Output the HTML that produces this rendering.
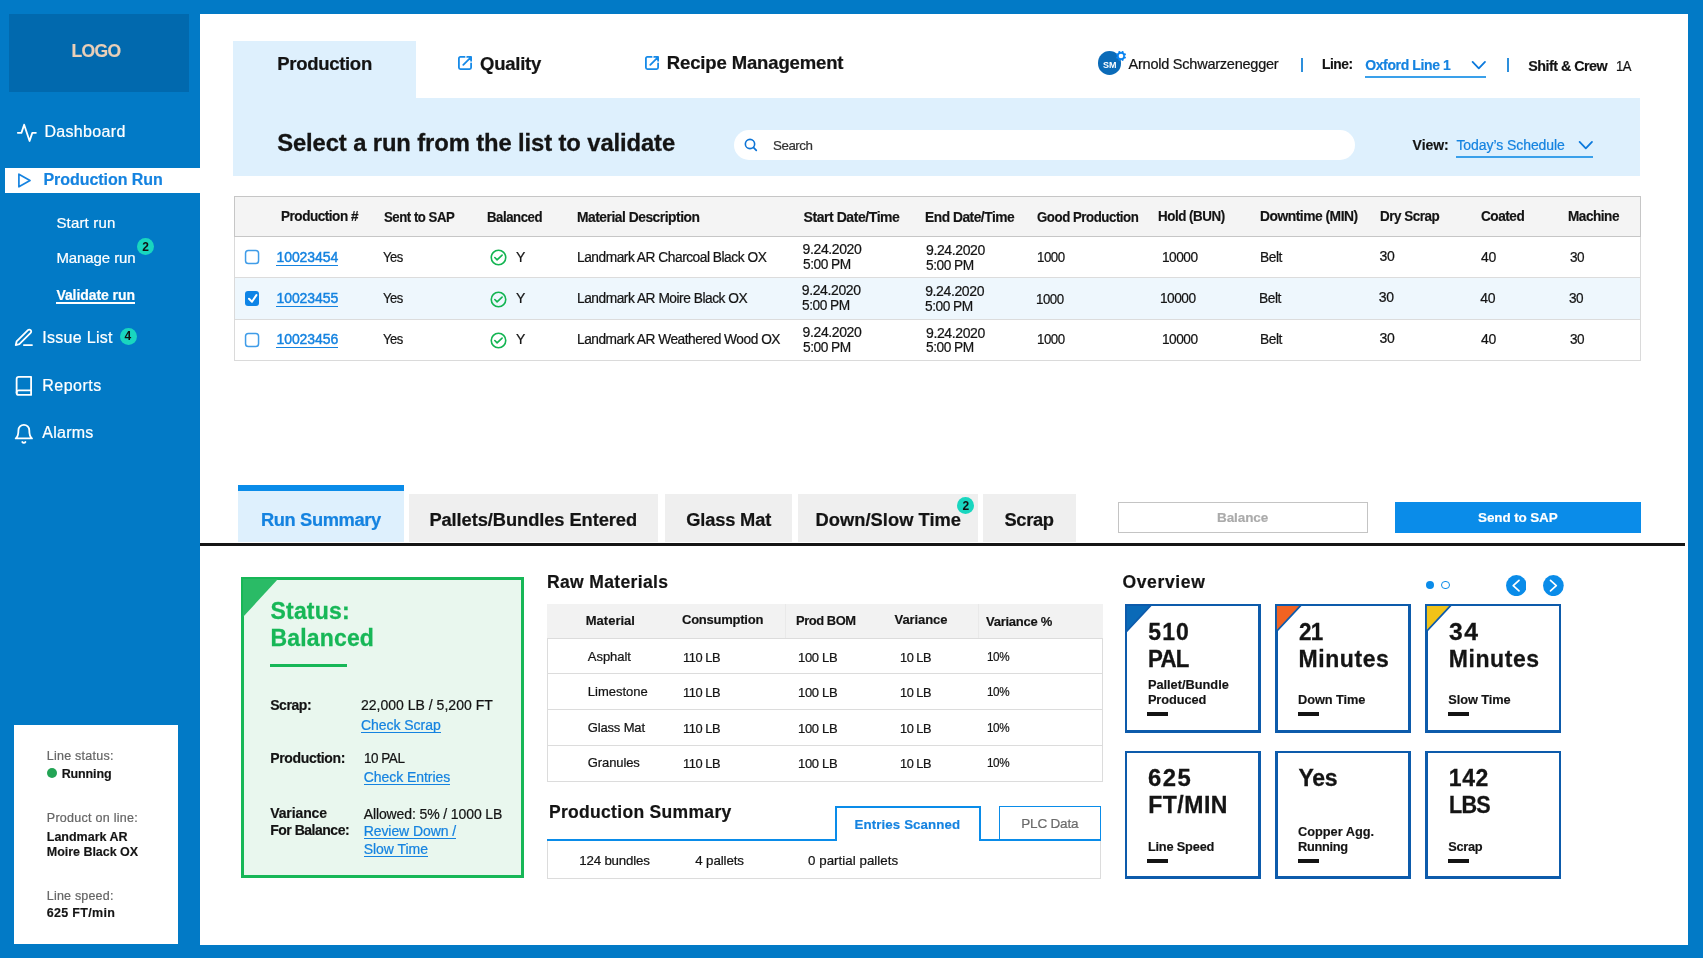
<!DOCTYPE html><html><head><meta charset="utf-8"><title>Production Run - Validate</title><style>
html,body{margin:0;padding:0}
body{width:1703px;height:958px;overflow:hidden;background:#027AC6;font-family:"Liberation Sans",Arial,sans-serif;position:relative}
#app{position:absolute;left:0;top:0;width:1703px;height:958px;overflow:hidden;will-change:transform}
#app div,#app svg,#app span{position:absolute;box-sizing:border-box}
#app span{white-space:nowrap;line-height:20px;display:block}
</style></head><body><div id="app">
<div style="left:200px;top:14.2px;width:1488px;height:930.8px;background:#fff;"></div>
<div style="left:8.5px;top:13.5px;width:180.5px;height:78.8px;background:#0169AE;"></div>
<div style="left:5px;top:167.5px;width:196px;height:25.8px;background:#fff;"></div>
<div style="left:56.4px;top:302.2px;width:78.6px;height:2px;background:#fff;"></div>
<div style="left:137px;top:237.6px;width:17.2px;height:17.2px;background:#19D6BF;border-radius:50%"></div>
<div style="left:119.5px;top:327.6px;width:17px;height:17px;background:#19D6BF;border-radius:50%"></div>
<svg style="left:16.2px;top:121.5px" width="21.72" height="21.72" viewBox="0 0 24 24"><g fill="none" stroke="#fff" stroke-width="2" stroke-linecap="round" stroke-linejoin="round"><polyline points="22 12 18 12 15 21 9 3 6 12 2 12"/></g></svg>
<svg style="left:16px;top:170px" width="18" height="21" viewBox="0 0 18 21"><path d="M2.9 4.2L14 10.5L2.9 16.8Z" fill="none" stroke="#1583E0" stroke-width="1.7" stroke-linejoin="round"/></svg>
<svg style="left:13.3px;top:327px" width="21.72" height="21.72" viewBox="0 0 24 24"><g fill="none" stroke="#fff" stroke-width="2" stroke-linecap="round" stroke-linejoin="round"><path d="M12 20h9"/><path d="M16.5 3.5a2.121 2.121 0 0 1 3 3L7 19l-4 1 1-4L16.5 3.5z"/></g></svg>
<svg style="left:12.6px;top:374.55px" width="21.72" height="21.72" viewBox="0 0 24 24"><g fill="none" stroke="#fff" stroke-width="2" stroke-linecap="round" stroke-linejoin="round"><path d="M4 19.5A2.5 2.5 0 0 1 6.5 17H20"/><path d="M6.5 2H20v20H6.5A2.5 2.5 0 0 1 4 19.5v-15A2.5 2.5 0 0 1 6.5 2z"/></g></svg>
<svg style="left:12.6px;top:423.1px" width="21.72" height="21.72" viewBox="0 0 24 24"><g fill="none" stroke="#fff" stroke-width="2" stroke-linecap="round" stroke-linejoin="round"><path d="M18 8A6 6 0 0 0 6 8c0 7-3 9-3 9h18s-3-2-3-9"/><path d="M13.73 21a2 2 0 0 1-3.46 0"/></g></svg>
<div style="left:14.2px;top:725.1px;width:164.1px;height:218.9px;background:#fff;"></div>
<div style="left:46.5px;top:768px;width:10.4px;height:10.4px;background:#23A455;border-radius:50%"></div>
<div style="left:233.2px;top:40.7px;width:183.2px;height:57.3px;background:#DEF0FD;"></div>
<div style="left:233.2px;top:97.6px;width:1406.9px;height:78.1px;background:#DEF0FD;"></div>
<svg style="left:457.9px;top:56.1px" width="14" height="14" viewBox="0 0 14 14"><g fill="none" stroke="#168AE8" stroke-width="1.8" stroke-linecap="round" stroke-linejoin="round"><path d="M6.6 0.9H2.4a1.5 1.5 0 0 0-1.5 1.5V11.6a1.5 1.5 0 0 0 1.5 1.5H11.6a1.5 1.5 0 0 0 1.5-1.5V7.3"/><path d="M5.3 8.8L12.8 1.3M9.2 0.9H13.1V4.8"/></g></svg>
<svg style="left:645.4px;top:56.1px" width="14" height="14" viewBox="0 0 14 14"><g fill="none" stroke="#168AE8" stroke-width="1.8" stroke-linecap="round" stroke-linejoin="round"><path d="M6.6 0.9H2.4a1.5 1.5 0 0 0-1.5 1.5V11.6a1.5 1.5 0 0 0 1.5 1.5H11.6a1.5 1.5 0 0 0 1.5-1.5V7.3"/><path d="M5.3 8.8L12.8 1.3M9.2 0.9H13.1V4.8"/></g></svg>
<div style="left:733.9px;top:130px;width:621.5px;height:30.2px;background:#fff;border-radius:15.1px"></div>
<svg style="left:743px;top:137px" width="16" height="16" viewBox="0 0 16 16"><circle cx="7" cy="7" r="4.65" fill="none" stroke="#0D74D6" stroke-width="1.6"/><path d="M10.4 10.4L13.3 13.4" stroke="#0D74D6" stroke-width="1.7" stroke-linecap="round"/></svg>
<svg style="left:1577.8px;top:139.8px" width="16" height="10.5" viewBox="0 0 16 10.5"><path d="M1.6 1.9L7.8 8.3L14 1.9" fill="none" stroke="#0B79DC" stroke-width="1.8" stroke-linejoin="round" stroke-linecap="round"/></svg>
<div style="left:1456.4px;top:156.3px;width:136.4px;height:1.9px;background:#3AA0EA;"></div>
<div style="left:1097.6px;top:51.1px;width:23.8px;height:24px;background:#0B6BB8;border-radius:50%"></div>
<svg style="left:1114.9px;top:49.7px" width="12" height="12" viewBox="0 0 12 12"><circle cx="6" cy="6" r="3.9" fill="#0A84F0"/><circle cx="9.79" cy="7.57" r="1.15" fill="#0A84F0"/><circle cx="7.57" cy="9.79" r="1.15" fill="#0A84F0"/><circle cx="4.43" cy="9.79" r="1.15" fill="#0A84F0"/><circle cx="2.21" cy="7.57" r="1.15" fill="#0A84F0"/><circle cx="2.21" cy="4.43" r="1.15" fill="#0A84F0"/><circle cx="4.43" cy="2.21" r="1.15" fill="#0A84F0"/><circle cx="7.57" cy="2.21" r="1.15" fill="#0A84F0"/><circle cx="9.79" cy="4.43" r="1.15" fill="#0A84F0"/><circle cx="6" cy="6" r="2.3" fill="#fff"/></svg>
<div style="left:1301.2px;top:57.6px;width:1.8px;height:14.7px;background:#2D8FDC;"></div>
<svg style="left:1471px;top:60px" width="16" height="10.5" viewBox="0 0 16 10.5"><path d="M1.6 1.9L7.8 8.3L14 1.9" fill="none" stroke="#0B79DC" stroke-width="1.8" stroke-linejoin="round" stroke-linecap="round"/></svg>
<div style="left:1365.2px;top:76px;width:120.6px;height:2px;background:#3AA0EA;"></div>
<div style="left:1507px;top:57.6px;width:1.8px;height:14.7px;background:#2D8FDC;"></div>
<div style="left:234px;top:236px;width:1407px;height:125px;background:#fff;border:1px solid #dadada;border-top:none"></div>
<div style="left:235px;top:278px;width:1405px;height:41px;background:#EEF7FD;"></div>
<div style="left:235px;top:277px;width:1405px;height:1px;background:#dcdcdc;"></div>
<div style="left:235px;top:319px;width:1405px;height:1px;background:#dcdcdc;"></div>
<div style="left:234px;top:196px;width:1407px;height:41px;background:#F4F4F4;border:1.5px solid #c6c6c6"></div>
<svg style="left:244px;top:249.1px" width="16" height="16" viewBox="0 0 16 16"><rect x="1.55" y="1.55" width="13" height="13" rx="2.8" fill="#fff" stroke="#3F9CE8" stroke-width="1.5"/></svg>
<div style="left:276.4px;top:264.7px;width:62px;height:1.4px;background:#1583E0;"></div>
<svg style="left:489.7px;top:249.3px" width="17" height="17" viewBox="0 0 17 17"><circle cx="8.5" cy="8.5" r="7.25" fill="none" stroke="#12B451" stroke-width="1.6"/><path d="M4.8 8.5L7.1 10.9L12.1 6.1" fill="none" stroke="#12B451" stroke-width="1.6" stroke-linecap="round" stroke-linejoin="round"/></svg>
<div style="left:244.8px;top:291.4px;width:14.6px;height:14.5px;background:#0E84E6;border-radius:3px"></div>
<svg style="left:244.8px;top:291.2px" width="14.7" height="14.7" viewBox="0 0 14.7 14.7"><path d="M4 7.7L7 10.7L11.4 4.1" fill="none" stroke="#fff" stroke-width="2" stroke-linecap="round" stroke-linejoin="round"/></svg>
<div style="left:276.4px;top:305.7px;width:62px;height:1.4px;background:#1583E0;"></div>
<svg style="left:489.7px;top:290.6px" width="17" height="17" viewBox="0 0 17 17"><circle cx="8.5" cy="8.5" r="7.25" fill="none" stroke="#12B451" stroke-width="1.6"/><path d="M4.8 8.5L7.1 10.9L12.1 6.1" fill="none" stroke="#12B451" stroke-width="1.6" stroke-linecap="round" stroke-linejoin="round"/></svg>
<svg style="left:244px;top:331.7px" width="16" height="16" viewBox="0 0 16 16"><rect x="1.55" y="1.55" width="13" height="13" rx="2.8" fill="#fff" stroke="#3F9CE8" stroke-width="1.5"/></svg>
<div style="left:276.4px;top:346.7px;width:62px;height:1.4px;background:#1583E0;"></div>
<svg style="left:489.7px;top:331.9px" width="17" height="17" viewBox="0 0 17 17"><circle cx="8.5" cy="8.5" r="7.25" fill="none" stroke="#12B451" stroke-width="1.6"/><path d="M4.8 8.5L7.1 10.9L12.1 6.1" fill="none" stroke="#12B451" stroke-width="1.6" stroke-linecap="round" stroke-linejoin="round"/></svg>
<div style="left:237.8px;top:484.8px;width:166.2px;height:57.4px;background:#DEF0FD;"></div>
<div style="left:237.8px;top:484.8px;width:166.2px;height:5.8px;background:#0A8CE9;"></div>
<div style="left:408.8px;top:494.2px;width:249.5px;height:47.6px;background:#EFEFEF;"></div>
<div style="left:665.1px;top:494.2px;width:127.4px;height:47.6px;background:#EFEFEF;"></div>
<div style="left:798.1px;top:494.2px;width:180.4px;height:47.6px;background:#EFEFEF;"></div>
<div style="left:983.3px;top:494.2px;width:92.4px;height:47.6px;background:#EFEFEF;"></div>
<div style="left:200px;top:543.3px;width:1485px;height:2.4px;background:#151515;"></div>
<div style="left:957.3px;top:497px;width:17px;height:17px;background:#19D6BF;border-radius:50%"></div>
<div style="left:1117.5px;top:501.8px;width:250.3px;height:31.6px;background:#fff;border:1.3px solid #c4c4c4"></div>
<div style="left:1395.4px;top:502.4px;width:245.4px;height:30.3px;background:#0A8CE9;"></div>
<div style="left:241.1px;top:577.1px;width:282.5px;height:300.7px;background:#17B757;"></div>
<div style="left:243.8px;top:580px;width:277px;height:295px;background:#E9F7EE;"></div>
<svg style="left:243px;top:579px" width="36" height="39" viewBox="0 0 36 39"><path d="M0 0H35L0 38Z" fill="#2ABB66"/></svg>
<div style="left:270.2px;top:663.9px;width:76.6px;height:3.5px;background:#17B757;"></div>
<div style="left:360.9px;top:731.6px;width:79.8px;height:1.3px;background:#1583E0;"></div>
<div style="left:363.7px;top:784px;width:86.6px;height:1.3px;background:#1583E0;"></div>
<div style="left:363.7px;top:838.2px;width:92.5px;height:1.3px;background:#1583E0;"></div>
<div style="left:363.7px;top:856px;width:64.3px;height:1.3px;background:#1583E0;"></div>
<div style="left:546.6px;top:603.9px;width:556.9px;height:177.9px;background:#fff;border:1.2px solid #dcdcdc"></div>
<div style="left:546.6px;top:603.9px;width:556.9px;height:34.1px;background:#F2F2F2;"></div>
<div style="left:785px;top:604px;width:1px;height:34px;background:#e9e9e9;"></div>
<div style="left:978px;top:604px;width:1px;height:34px;background:#e9e9e9;"></div>
<div style="left:546.6px;top:637.6px;width:556.9px;height:1.2px;background:#dcdcdc;"></div>
<div style="left:546.6px;top:672.9px;width:556.9px;height:1.2px;background:#dcdcdc;"></div>
<div style="left:546.6px;top:708.8px;width:556.9px;height:1.2px;background:#dcdcdc;"></div>
<div style="left:546.6px;top:744.6px;width:556.9px;height:1.2px;background:#dcdcdc;"></div>
<div style="left:547.3px;top:840px;width:553.7px;height:39.2px;background:#fff;border:1.2px solid #dcdcdc"></div>
<div style="left:547.3px;top:838.9px;width:553.7px;height:2.1px;background:#0A8CE9;"></div>
<div style="left:834.7px;top:806.4px;width:146.6px;height:34.6px;background:#fff;border:2px solid #0A8CE9;border-bottom:none"></div>
<div style="left:999.1px;top:806.4px;width:101.5px;height:34.6px;background:#fff;border:1.2px solid #0A8CE9;border-bottom:2px solid #0A8CE9"></div>
<div style="left:1425.6px;top:580.9px;width:8px;height:8px;background:#0A8CE9;border-radius:50%"></div>
<div style="left:1441.4px;top:580.6px;width:8.6px;height:8.6px;background:#fff;border-radius:50%;border:1.3px solid #0A8CE9"></div>
<svg style="left:1505.6px;top:574.8px" width="20.8" height="21.2" viewBox="0 0 20.8 21.2"><ellipse cx="10.4" cy="10.6" rx="10.35" ry="10.55" fill="#0A8CE9"/><path d="M13 5.3L7.2 10.6L13 15.9" fill="none" stroke="#fff" stroke-width="1.7" stroke-linecap="round" stroke-linejoin="round"/></svg>
<svg style="left:1542.8px;top:574.8px" width="20.8" height="21.2" viewBox="0 0 20.8 21.2"><ellipse cx="10.4" cy="10.6" rx="10.35" ry="10.55" fill="#0A8CE9"/><path d="M7.5 5.3L13.3 10.6L7.5 15.9" fill="none" stroke="#fff" stroke-width="1.7" stroke-linecap="round" stroke-linejoin="round"/></svg>
<div style="left:1124.8px;top:603.9px;width:136.1px;height:129.1px;background:#0D5BAB;"></div>
<div style="left:1127.3px;top:606.4px;width:131.1px;height:124.1px;background:#fff;"></div>
<svg style="left:1125.8px;top:604.9px" width="30" height="32" viewBox="0 0 30 32"><path d="M0 0H25.2L0 27Z" fill="#0A6AB8" stroke="#0D5BAB" stroke-width="1.8"/></svg>
<div style="left:1147.3px;top:712.3px;width:21.2px;height:3.6px;background:#141414;"></div>
<div style="left:1275px;top:603.9px;width:135.9px;height:129.1px;background:#0D5BAB;"></div>
<div style="left:1277.5px;top:606.4px;width:130.9px;height:124.1px;background:#fff;"></div>
<svg style="left:1276px;top:604.9px" width="30" height="32" viewBox="0 0 30 32"><path d="M0 0H25.2L0 27Z" fill="#F26322" stroke="#0D5BAB" stroke-width="1.8"/></svg>
<div style="left:1297.5px;top:712.3px;width:21.2px;height:3.6px;background:#141414;"></div>
<div style="left:1425.2px;top:603.9px;width:136.2px;height:129.1px;background:#0D5BAB;"></div>
<div style="left:1427.7px;top:606.4px;width:131.2px;height:124.1px;background:#fff;"></div>
<svg style="left:1426.2px;top:604.9px" width="30" height="32" viewBox="0 0 30 32"><path d="M0 0H25.2L0 27Z" fill="#F2C318" stroke="#0D5BAB" stroke-width="1.8"/></svg>
<div style="left:1447.7px;top:712.3px;width:21.2px;height:3.6px;background:#141414;"></div>
<div style="left:1124.8px;top:750.6px;width:136.1px;height:128.2px;background:#0D5BAB;"></div>
<div style="left:1127.3px;top:753.1px;width:131.1px;height:123.2px;background:#fff;"></div>
<div style="left:1147.3px;top:859px;width:21.2px;height:3.6px;background:#141414;"></div>
<div style="left:1275px;top:750.6px;width:135.9px;height:128.2px;background:#0D5BAB;"></div>
<div style="left:1277.5px;top:753.1px;width:130.9px;height:123.2px;background:#fff;"></div>
<div style="left:1297.5px;top:859px;width:21.2px;height:3.6px;background:#141414;"></div>
<div style="left:1425.2px;top:750.6px;width:136.2px;height:128.2px;background:#0D5BAB;"></div>
<div style="left:1427.7px;top:753.1px;width:131.2px;height:123.2px;background:#fff;"></div>
<div style="left:1447.7px;top:859px;width:21.2px;height:3.6px;background:#141414;"></div>
<span style="left:71.4px;top:41px;line-height:20px;font-size:17.5px;font-weight:700;color:#E9CFB8;letter-spacing:-0.613px;-webkit-text-stroke:0.21px;">LOGO</span>
<span style="left:44.4px;top:123px;line-height:17px;font-size:16px;font-weight:400;color:#fff;letter-spacing:0.340px;-webkit-text-stroke:0.22px;">Dashboard</span>
<span style="left:43.4px;top:171px;line-height:17px;font-size:16px;font-weight:700;color:#1583E0;letter-spacing:-0.045px;-webkit-text-stroke:0.19px;">Production Run</span>
<span style="left:56.4px;top:214px;line-height:17px;font-size:15px;font-weight:400;color:#fff;letter-spacing:0.171px;-webkit-text-stroke:0.22px;">Start run</span>
<span style="left:56.4px;top:249px;line-height:17px;font-size:15px;font-weight:400;color:#fff;letter-spacing:-0.085px;-webkit-text-stroke:0.22px;">Manage run</span>
<span style="left:56.4px;top:287px;line-height:16px;font-size:14px;font-weight:700;color:#fff;letter-spacing:-0.069px;-webkit-text-stroke:0.17px;">Validate run</span>
<span style="left:42.3px;top:329px;line-height:17px;font-size:16px;font-weight:400;color:#fff;letter-spacing:0.290px;-webkit-text-stroke:0.22px;">Issue List</span>
<span style="left:42.3px;top:377px;line-height:17px;font-size:16px;font-weight:400;color:#fff;letter-spacing:0.478px;-webkit-text-stroke:0.22px;">Reports</span>
<span style="left:42.3px;top:424px;line-height:17px;font-size:16px;font-weight:400;color:#fff;letter-spacing:0.244px;-webkit-text-stroke:0.22px;">Alarms</span>
<span style="left:142.2px;top:240px;line-height:14px;font-size:12px;font-weight:700;color:#111;letter-spacing:0.000px;">2</span>
<span style="left:124.6px;top:329px;line-height:14px;font-size:12px;font-weight:700;color:#111;letter-spacing:0.000px;">4</span>
<span style="left:46.8px;top:749px;line-height:14px;font-size:12.5px;font-weight:400;color:#666;letter-spacing:0.242px;-webkit-text-stroke:0.22px;">Line status:</span>
<span style="left:61.7px;top:767px;line-height:14px;font-size:12.5px;font-weight:700;color:#141414;letter-spacing:-0.131px;-webkit-text-stroke:0.15px;">Running</span>
<span style="left:46.8px;top:811px;line-height:14px;font-size:12.5px;font-weight:400;color:#666;letter-spacing:0.276px;-webkit-text-stroke:0.22px;">Product on line:</span>
<span style="left:46.8px;top:830px;line-height:14px;font-size:12.5px;font-weight:700;color:#141414;letter-spacing:-0.011px;-webkit-text-stroke:0.15px;">Landmark AR</span>
<span style="left:46.8px;top:845px;line-height:14px;font-size:12.5px;font-weight:700;color:#141414;letter-spacing:-0.031px;-webkit-text-stroke:0.15px;">Moire Black OX</span>
<span style="left:46.8px;top:889px;line-height:14px;font-size:12.5px;font-weight:400;color:#666;letter-spacing:0.196px;-webkit-text-stroke:0.22px;">Line speed:</span>
<span style="left:46.8px;top:906px;line-height:14px;font-size:12.5px;font-weight:700;color:#141414;letter-spacing:0.311px;-webkit-text-stroke:0.15px;">625 FT/min</span>
<span style="left:277.2px;top:53px;line-height:21px;font-size:18.5px;font-weight:700;color:#141414;letter-spacing:-0.293px;-webkit-text-stroke:0.22px;">Production</span>
<span style="left:480.1px;top:53px;line-height:21px;font-size:18.5px;font-weight:700;color:#141414;letter-spacing:-0.253px;-webkit-text-stroke:0.22px;">Quality</span>
<span style="left:666.8px;top:52px;line-height:21px;font-size:18.5px;font-weight:700;color:#141414;letter-spacing:-0.137px;-webkit-text-stroke:0.22px;">Recipe Management</span>
<span style="left:277.2px;top:129px;line-height:27px;font-size:23.8px;font-weight:700;color:#141414;letter-spacing:-0.109px;-webkit-text-stroke:0.29px;">Select a run from the list to validate</span>
<span style="left:773px;top:138px;line-height:15px;font-size:13.5px;font-weight:400;color:#333;letter-spacing:-0.473px;-webkit-text-stroke:0.22px;transform:scaleX(0.9896);transform-origin:0 50%;">Search</span>
<span style="left:1412.6px;top:137px;line-height:16px;font-size:14px;font-weight:700;color:#141414;letter-spacing:-0.053px;-webkit-text-stroke:0.17px;">View:</span>
<span style="left:1456.4px;top:137px;line-height:16px;font-size:14px;font-weight:400;color:#1583E0;letter-spacing:-0.066px;-webkit-text-stroke:0.22px;">Today&rsquo;s Schedule</span>
<span style="left:1103px;top:60px;line-height:10px;font-size:9px;font-weight:700;color:#fff;letter-spacing:-0.100px;">SM</span>
<span style="left:1128.5px;top:56px;line-height:16px;font-size:14.5px;font-weight:400;color:#141414;letter-spacing:-0.228px;-webkit-text-stroke:0.22px;">Arnold Schwarzenegger</span>
<span style="left:1322.4px;top:56px;line-height:16px;font-size:14px;font-weight:700;color:#141414;letter-spacing:-0.490px;-webkit-text-stroke:0.17px;transform:scaleX(0.9843);transform-origin:0 50%;">Line:</span>
<span style="left:1365.2px;top:57px;line-height:16px;font-size:14px;font-weight:700;color:#1583E0;letter-spacing:-0.378px;-webkit-text-stroke:0.17px;">Oxford Line 1</span>
<span style="left:1528.2px;top:58px;line-height:16px;font-size:14.3px;font-weight:700;color:#141414;letter-spacing:-0.500px;-webkit-text-stroke:0.17px;">Shift &amp; Crew</span>
<span style="left:1616.2px;top:58px;line-height:16px;font-size:14.3px;font-weight:400;color:#141414;letter-spacing:-0.501px;-webkit-text-stroke:0.22px;transform:scaleX(0.9118);transform-origin:0 50%;">1A</span>
<span style="left:280.6px;top:208px;line-height:16px;font-size:14px;font-weight:700;color:#141414;letter-spacing:-0.490px;-webkit-text-stroke:0.17px;transform:scaleX(0.9667);transform-origin:0 50%;">Production #</span>
<span style="left:384px;top:209px;line-height:16px;font-size:14px;font-weight:700;color:#141414;letter-spacing:-0.490px;-webkit-text-stroke:0.17px;transform:scaleX(0.9412);transform-origin:0 50%;">Sent to SAP</span>
<span style="left:487.2px;top:209px;line-height:16px;font-size:14px;font-weight:700;color:#141414;letter-spacing:-0.490px;-webkit-text-stroke:0.17px;transform:scaleX(0.9436);transform-origin:0 50%;">Balanced</span>
<span style="left:577.4px;top:209px;line-height:16px;font-size:14px;font-weight:700;color:#141414;letter-spacing:-0.490px;-webkit-text-stroke:0.17px;transform:scaleX(0.9870);transform-origin:0 50%;">Material Description</span>
<span style="left:803.5px;top:209px;line-height:16px;font-size:14px;font-weight:700;color:#141414;letter-spacing:-0.432px;-webkit-text-stroke:0.17px;">Start Date/Time</span>
<span style="left:925.2px;top:209px;line-height:16px;font-size:14px;font-weight:700;color:#141414;letter-spacing:-0.490px;-webkit-text-stroke:0.17px;transform:scaleX(0.9844);transform-origin:0 50%;">End Date/Time</span>
<span style="left:1037.4px;top:209px;line-height:16px;font-size:14px;font-weight:700;color:#141414;letter-spacing:-0.490px;-webkit-text-stroke:0.17px;transform:scaleX(0.9473);transform-origin:0 50%;">Good Production</span>
<span style="left:1158px;top:208px;line-height:16px;font-size:14px;font-weight:700;color:#141414;letter-spacing:-0.490px;-webkit-text-stroke:0.17px;transform:scaleX(0.9552);transform-origin:0 50%;">Hold (BUN)</span>
<span style="left:1259.5px;top:208px;line-height:16px;font-size:14px;font-weight:700;color:#141414;letter-spacing:-0.490px;-webkit-text-stroke:0.17px;transform:scaleX(0.9870);transform-origin:0 50%;">Downtime (MIN)</span>
<span style="left:1380.2px;top:208px;line-height:16px;font-size:14px;font-weight:700;color:#141414;letter-spacing:-0.490px;-webkit-text-stroke:0.17px;transform:scaleX(0.9592);transform-origin:0 50%;">Dry Scrap</span>
<span style="left:1481px;top:208px;line-height:16px;font-size:14px;font-weight:700;color:#141414;letter-spacing:-0.490px;-webkit-text-stroke:0.17px;transform:scaleX(0.9733);transform-origin:0 50%;">Coated</span>
<span style="left:1568.3px;top:208px;line-height:16px;font-size:14px;font-weight:700;color:#141414;letter-spacing:-0.490px;-webkit-text-stroke:0.17px;transform:scaleX(0.9703);transform-origin:0 50%;">Machine</span>
<span style="left:276.4px;top:249px;line-height:16px;font-size:14px;font-weight:400;color:#1583E0;letter-spacing:-0.042px;-webkit-text-stroke:0.45px;">10023454</span>
<span style="left:382.9px;top:249px;line-height:16px;font-size:14px;font-weight:400;color:#141414;letter-spacing:-0.490px;-webkit-text-stroke:0.22px;transform:scaleX(0.9285);transform-origin:0 50%;">Yes</span>
<span style="left:516px;top:249px;line-height:16px;font-size:14px;font-weight:400;color:#141414;letter-spacing:0.000px;-webkit-text-stroke:0.22px;">Y</span>
<span style="left:576.5px;top:249px;line-height:16px;font-size:14px;font-weight:400;color:#141414;letter-spacing:-0.490px;-webkit-text-stroke:0.22px;transform:scaleX(0.9821);transform-origin:0 50%;">Landmark AR Charcoal Black OX</span>
<span style="left:802.6px;top:241px;line-height:16px;font-size:14px;font-weight:400;color:#141414;letter-spacing:-0.387px;-webkit-text-stroke:0.22px;">9.24.2020</span>
<span style="left:802.6px;top:256px;line-height:16px;font-size:14px;font-weight:400;color:#141414;letter-spacing:-0.490px;-webkit-text-stroke:0.22px;transform:scaleX(0.9797);transform-origin:0 50%;">5:00 PM</span>
<span style="left:926px;top:242px;line-height:16px;font-size:14px;font-weight:400;color:#141414;letter-spacing:-0.375px;-webkit-text-stroke:0.22px;">9.24.2020</span>
<span style="left:926px;top:257px;line-height:16px;font-size:14px;font-weight:400;color:#141414;letter-spacing:-0.490px;-webkit-text-stroke:0.22px;transform:scaleX(0.9797);transform-origin:0 50%;">5:00 PM</span>
<span style="left:1036.6px;top:249px;line-height:16px;font-size:14px;font-weight:400;color:#141414;letter-spacing:-0.490px;-webkit-text-stroke:0.22px;transform:scaleX(0.9499);transform-origin:0 50%;">1000</span>
<span style="left:1161.7px;top:249px;line-height:16px;font-size:14px;font-weight:400;color:#141414;letter-spacing:-0.490px;-webkit-text-stroke:0.22px;transform:scaleX(0.9763);transform-origin:0 50%;">10000</span>
<span style="left:1259.5px;top:249px;line-height:16px;font-size:14px;font-weight:400;color:#141414;letter-spacing:-0.490px;-webkit-text-stroke:0.22px;transform:scaleX(0.9843);transform-origin:0 50%;">Belt</span>
<span style="left:1379.6px;top:248px;line-height:16px;font-size:14px;font-weight:400;color:#141414;letter-spacing:-0.378px;-webkit-text-stroke:0.22px;">30</span>
<span style="left:1481px;top:249px;line-height:16px;font-size:14px;font-weight:400;color:#141414;letter-spacing:-0.278px;-webkit-text-stroke:0.22px;">40</span>
<span style="left:1569.7px;top:249px;line-height:16px;font-size:14px;font-weight:400;color:#141414;letter-spacing:-0.490px;-webkit-text-stroke:0.22px;transform:scaleX(0.9676);transform-origin:0 50%;">30</span>
<span style="left:276.4px;top:290px;line-height:16px;font-size:14px;font-weight:400;color:#1583E0;letter-spacing:-0.042px;-webkit-text-stroke:0.45px;">10023455</span>
<span style="left:382.9px;top:290px;line-height:16px;font-size:14px;font-weight:400;color:#141414;letter-spacing:-0.490px;-webkit-text-stroke:0.22px;transform:scaleX(0.9285);transform-origin:0 50%;">Yes</span>
<span style="left:516px;top:290px;line-height:16px;font-size:14px;font-weight:400;color:#141414;letter-spacing:0.000px;-webkit-text-stroke:0.22px;">Y</span>
<span style="left:576.5px;top:290px;line-height:16px;font-size:14px;font-weight:400;color:#141414;letter-spacing:-0.490px;-webkit-text-stroke:0.22px;transform:scaleX(0.9826);transform-origin:0 50%;">Landmark AR Moire Black OX</span>
<span style="left:801.8px;top:282px;line-height:16px;font-size:14px;font-weight:400;color:#141414;letter-spacing:-0.387px;-webkit-text-stroke:0.22px;">9.24.2020</span>
<span style="left:801.8px;top:297px;line-height:16px;font-size:14px;font-weight:400;color:#141414;letter-spacing:-0.490px;-webkit-text-stroke:0.22px;transform:scaleX(0.9797);transform-origin:0 50%;">5:00 PM</span>
<span style="left:925.2px;top:283px;line-height:16px;font-size:14px;font-weight:400;color:#141414;letter-spacing:-0.375px;-webkit-text-stroke:0.22px;">9.24.2020</span>
<span style="left:925.2px;top:298px;line-height:16px;font-size:14px;font-weight:400;color:#141414;letter-spacing:-0.490px;-webkit-text-stroke:0.22px;transform:scaleX(0.9797);transform-origin:0 50%;">5:00 PM</span>
<span style="left:1035.8px;top:291px;line-height:16px;font-size:14px;font-weight:400;color:#141414;letter-spacing:-0.490px;-webkit-text-stroke:0.22px;transform:scaleX(0.9499);transform-origin:0 50%;">1000</span>
<span style="left:1160.1px;top:290px;line-height:16px;font-size:14px;font-weight:400;color:#141414;letter-spacing:-0.490px;-webkit-text-stroke:0.22px;transform:scaleX(0.9763);transform-origin:0 50%;">10000</span>
<span style="left:1258.7px;top:290px;line-height:16px;font-size:14px;font-weight:400;color:#141414;letter-spacing:-0.490px;-webkit-text-stroke:0.22px;transform:scaleX(0.9843);transform-origin:0 50%;">Belt</span>
<span style="left:1378.8px;top:289px;line-height:16px;font-size:14px;font-weight:400;color:#141414;letter-spacing:-0.378px;-webkit-text-stroke:0.22px;">30</span>
<span style="left:1480.2px;top:290px;line-height:16px;font-size:14px;font-weight:400;color:#141414;letter-spacing:-0.278px;-webkit-text-stroke:0.22px;">40</span>
<span style="left:1568.9px;top:290px;line-height:16px;font-size:14px;font-weight:400;color:#141414;letter-spacing:-0.490px;-webkit-text-stroke:0.22px;transform:scaleX(0.9676);transform-origin:0 50%;">30</span>
<span style="left:276.4px;top:331px;line-height:16px;font-size:14px;font-weight:400;color:#1583E0;letter-spacing:-0.042px;-webkit-text-stroke:0.45px;">10023456</span>
<span style="left:382.9px;top:331px;line-height:16px;font-size:14px;font-weight:400;color:#141414;letter-spacing:-0.490px;-webkit-text-stroke:0.22px;transform:scaleX(0.9285);transform-origin:0 50%;">Yes</span>
<span style="left:516px;top:331px;line-height:16px;font-size:14px;font-weight:400;color:#141414;letter-spacing:0.000px;-webkit-text-stroke:0.22px;">Y</span>
<span style="left:576.5px;top:331px;line-height:16px;font-size:14px;font-weight:400;color:#141414;letter-spacing:-0.490px;-webkit-text-stroke:0.22px;transform:scaleX(0.9805);transform-origin:0 50%;">Landmark AR Weathered Wood OX</span>
<span style="left:802.6px;top:324px;line-height:16px;font-size:14px;font-weight:400;color:#141414;letter-spacing:-0.387px;-webkit-text-stroke:0.22px;">9.24.2020</span>
<span style="left:802.6px;top:339px;line-height:16px;font-size:14px;font-weight:400;color:#141414;letter-spacing:-0.490px;-webkit-text-stroke:0.22px;transform:scaleX(0.9797);transform-origin:0 50%;">5:00 PM</span>
<span style="left:926px;top:325px;line-height:16px;font-size:14px;font-weight:400;color:#141414;letter-spacing:-0.375px;-webkit-text-stroke:0.22px;">9.24.2020</span>
<span style="left:926px;top:339px;line-height:16px;font-size:14px;font-weight:400;color:#141414;letter-spacing:-0.490px;-webkit-text-stroke:0.22px;transform:scaleX(0.9797);transform-origin:0 50%;">5:00 PM</span>
<span style="left:1036.6px;top:331px;line-height:16px;font-size:14px;font-weight:400;color:#141414;letter-spacing:-0.490px;-webkit-text-stroke:0.22px;transform:scaleX(0.9499);transform-origin:0 50%;">1000</span>
<span style="left:1161.7px;top:331px;line-height:16px;font-size:14px;font-weight:400;color:#141414;letter-spacing:-0.490px;-webkit-text-stroke:0.22px;transform:scaleX(0.9763);transform-origin:0 50%;">10000</span>
<span style="left:1259.5px;top:331px;line-height:16px;font-size:14px;font-weight:400;color:#141414;letter-spacing:-0.490px;-webkit-text-stroke:0.22px;transform:scaleX(0.9843);transform-origin:0 50%;">Belt</span>
<span style="left:1379.6px;top:330px;line-height:16px;font-size:14px;font-weight:400;color:#141414;letter-spacing:-0.378px;-webkit-text-stroke:0.22px;">30</span>
<span style="left:1481px;top:331px;line-height:16px;font-size:14px;font-weight:400;color:#141414;letter-spacing:-0.278px;-webkit-text-stroke:0.22px;">40</span>
<span style="left:1569.7px;top:331px;line-height:16px;font-size:14px;font-weight:400;color:#141414;letter-spacing:-0.490px;-webkit-text-stroke:0.22px;transform:scaleX(0.9676);transform-origin:0 50%;">30</span>
<span style="left:260.9px;top:509px;line-height:21px;font-size:18.3px;font-weight:700;color:#1583E0;letter-spacing:-0.364px;-webkit-text-stroke:0.22px;">Run Summary</span>
<span style="left:429.4px;top:509px;line-height:21px;font-size:18.3px;font-weight:700;color:#141414;letter-spacing:-0.072px;-webkit-text-stroke:0.22px;">Pallets/Bundles Entered</span>
<span style="left:686.2px;top:509px;line-height:21px;font-size:18.3px;font-weight:700;color:#141414;letter-spacing:-0.159px;-webkit-text-stroke:0.22px;">Glass Mat</span>
<span style="left:815.6px;top:509px;line-height:21px;font-size:18.3px;font-weight:700;color:#141414;letter-spacing:0.037px;-webkit-text-stroke:0.22px;">Down/Slow Time</span>
<span style="left:1004.4px;top:509px;line-height:21px;font-size:18.3px;font-weight:700;color:#141414;letter-spacing:-0.303px;-webkit-text-stroke:0.22px;">Scrap</span>
<span style="left:962.4px;top:499px;line-height:14px;font-size:12px;font-weight:700;color:#111;letter-spacing:0.000px;">2</span>
<span style="left:1217px;top:510px;line-height:15px;font-size:13.5px;font-weight:700;color:#ABABAB;letter-spacing:-0.080px;-webkit-text-stroke:0.16px;">Balance</span>
<span style="left:1478.1px;top:510px;line-height:15px;font-size:13.5px;font-weight:700;color:#fff;letter-spacing:-0.142px;-webkit-text-stroke:0.16px;">Send to SAP</span>
<span style="left:270.5px;top:598px;line-height:26px;font-size:23px;font-weight:700;color:#17B757;letter-spacing:0.191px;-webkit-text-stroke:0.28px;">Status:</span>
<span style="left:270.5px;top:625px;line-height:26px;font-size:23px;font-weight:700;color:#17B757;letter-spacing:0.162px;-webkit-text-stroke:0.28px;">Balanced</span>
<span style="left:270.2px;top:697px;line-height:16px;font-size:14px;font-weight:700;color:#141414;letter-spacing:-0.436px;-webkit-text-stroke:0.17px;">Scrap:</span>
<span style="left:360.9px;top:697px;line-height:16px;font-size:14px;font-weight:400;color:#141414;letter-spacing:0.019px;-webkit-text-stroke:0.22px;">22,000 LB / 5,200 FT</span>
<span style="left:360.9px;top:717px;line-height:16px;font-size:14px;font-weight:400;color:#1583E0;letter-spacing:-0.036px;-webkit-text-stroke:0.22px;">Check Scrap</span>
<span style="left:270.2px;top:750px;line-height:16px;font-size:14px;font-weight:700;color:#141414;letter-spacing:-0.335px;-webkit-text-stroke:0.17px;">Production:</span>
<span style="left:363.7px;top:750px;line-height:16px;font-size:14px;font-weight:400;color:#141414;letter-spacing:-0.490px;-webkit-text-stroke:0.22px;transform:scaleX(0.9637);transform-origin:0 50%;">10 PAL</span>
<span style="left:363.7px;top:769px;line-height:16px;font-size:14px;font-weight:400;color:#1583E0;letter-spacing:-0.046px;-webkit-text-stroke:0.22px;">Check Entries</span>
<span style="left:270.2px;top:805px;line-height:16px;font-size:14px;font-weight:700;color:#141414;letter-spacing:-0.101px;-webkit-text-stroke:0.17px;">Variance</span>
<span style="left:270.2px;top:822px;line-height:16px;font-size:14px;font-weight:700;color:#141414;letter-spacing:-0.490px;-webkit-text-stroke:0.17px;">For Balance:</span>
<span style="left:363.7px;top:806px;line-height:16px;font-size:14px;font-weight:400;color:#141414;letter-spacing:-0.109px;-webkit-text-stroke:0.22px;">Allowed: 5% / 1000 LB</span>
<span style="left:363.7px;top:823px;line-height:16px;font-size:14px;font-weight:400;color:#1583E0;letter-spacing:-0.073px;-webkit-text-stroke:0.22px;">Review Down /</span>
<span style="left:363.7px;top:841px;line-height:16px;font-size:14px;font-weight:400;color:#1583E0;letter-spacing:-0.035px;-webkit-text-stroke:0.22px;">Slow Time</span>
<span style="left:546.9px;top:572px;line-height:20px;font-size:17.5px;font-weight:700;color:#141414;letter-spacing:0.373px;-webkit-text-stroke:0.21px;">Raw Materials</span>
<span style="left:585.8px;top:613px;line-height:15px;font-size:13px;font-weight:700;color:#141414;letter-spacing:-0.006px;-webkit-text-stroke:0.16px;">Material</span>
<span style="left:682px;top:612px;line-height:15px;font-size:13px;font-weight:700;color:#141414;letter-spacing:-0.237px;-webkit-text-stroke:0.16px;">Consumption</span>
<span style="left:796.4px;top:613px;line-height:15px;font-size:13px;font-weight:700;color:#141414;letter-spacing:-0.455px;-webkit-text-stroke:0.16px;transform:scaleX(0.9937);transform-origin:0 50%;">Prod BOM</span>
<span style="left:894.5px;top:612px;line-height:15px;font-size:13px;font-weight:700;color:#141414;letter-spacing:-0.071px;-webkit-text-stroke:0.16px;">Variance</span>
<span style="left:986.1px;top:614px;line-height:15px;font-size:13px;font-weight:700;color:#141414;letter-spacing:-0.273px;-webkit-text-stroke:0.16px;">Variance %</span>
<span style="left:587.8px;top:649px;line-height:15px;font-size:13px;font-weight:400;color:#141414;letter-spacing:-0.046px;-webkit-text-stroke:0.22px;">Asphalt</span>
<span style="left:682.5px;top:650px;line-height:15px;font-size:13px;font-weight:400;color:#141414;letter-spacing:-0.455px;-webkit-text-stroke:0.22px;transform:scaleX(0.9875);transform-origin:0 50%;">110 LB</span>
<span style="left:798.1px;top:650px;line-height:15px;font-size:13px;font-weight:400;color:#141414;letter-spacing:-0.341px;-webkit-text-stroke:0.22px;">100 LB</span>
<span style="left:899.6px;top:650px;line-height:15px;font-size:13px;font-weight:400;color:#141414;letter-spacing:-0.455px;-webkit-text-stroke:0.22px;transform:scaleX(0.9793);transform-origin:0 50%;">10 LB</span>
<span style="left:986.9px;top:649px;line-height:15px;font-size:13px;font-weight:400;color:#141414;letter-spacing:-0.455px;-webkit-text-stroke:0.22px;transform:scaleX(0.8996);transform-origin:0 50%;">10%</span>
<span style="left:587.8px;top:684px;line-height:15px;font-size:13px;font-weight:400;color:#141414;letter-spacing:0.002px;-webkit-text-stroke:0.22px;">Limestone</span>
<span style="left:682.5px;top:685px;line-height:15px;font-size:13px;font-weight:400;color:#141414;letter-spacing:-0.455px;-webkit-text-stroke:0.22px;transform:scaleX(0.9875);transform-origin:0 50%;">110 LB</span>
<span style="left:798.1px;top:685px;line-height:15px;font-size:13px;font-weight:400;color:#141414;letter-spacing:-0.341px;-webkit-text-stroke:0.22px;">100 LB</span>
<span style="left:899.6px;top:685px;line-height:15px;font-size:13px;font-weight:400;color:#141414;letter-spacing:-0.455px;-webkit-text-stroke:0.22px;transform:scaleX(0.9793);transform-origin:0 50%;">10 LB</span>
<span style="left:986.9px;top:684px;line-height:15px;font-size:13px;font-weight:400;color:#141414;letter-spacing:-0.455px;-webkit-text-stroke:0.22px;transform:scaleX(0.8996);transform-origin:0 50%;">10%</span>
<span style="left:587.8px;top:720px;line-height:15px;font-size:13px;font-weight:400;color:#141414;letter-spacing:-0.164px;-webkit-text-stroke:0.22px;">Glass Mat</span>
<span style="left:682.5px;top:721px;line-height:15px;font-size:13px;font-weight:400;color:#141414;letter-spacing:-0.455px;-webkit-text-stroke:0.22px;transform:scaleX(0.9875);transform-origin:0 50%;">110 LB</span>
<span style="left:798.1px;top:721px;line-height:15px;font-size:13px;font-weight:400;color:#141414;letter-spacing:-0.341px;-webkit-text-stroke:0.22px;">100 LB</span>
<span style="left:899.6px;top:721px;line-height:15px;font-size:13px;font-weight:400;color:#141414;letter-spacing:-0.455px;-webkit-text-stroke:0.22px;transform:scaleX(0.9793);transform-origin:0 50%;">10 LB</span>
<span style="left:986.9px;top:720px;line-height:15px;font-size:13px;font-weight:400;color:#141414;letter-spacing:-0.455px;-webkit-text-stroke:0.22px;transform:scaleX(0.8996);transform-origin:0 50%;">10%</span>
<span style="left:587.8px;top:755px;line-height:15px;font-size:13px;font-weight:400;color:#141414;letter-spacing:-0.107px;-webkit-text-stroke:0.22px;">Granules</span>
<span style="left:682.5px;top:756px;line-height:15px;font-size:13px;font-weight:400;color:#141414;letter-spacing:-0.455px;-webkit-text-stroke:0.22px;transform:scaleX(0.9875);transform-origin:0 50%;">110 LB</span>
<span style="left:798.1px;top:756px;line-height:15px;font-size:13px;font-weight:400;color:#141414;letter-spacing:-0.341px;-webkit-text-stroke:0.22px;">100 LB</span>
<span style="left:899.6px;top:756px;line-height:15px;font-size:13px;font-weight:400;color:#141414;letter-spacing:-0.455px;-webkit-text-stroke:0.22px;transform:scaleX(0.9793);transform-origin:0 50%;">10 LB</span>
<span style="left:986.9px;top:755px;line-height:15px;font-size:13px;font-weight:400;color:#141414;letter-spacing:-0.455px;-webkit-text-stroke:0.22px;transform:scaleX(0.8996);transform-origin:0 50%;">10%</span>
<span style="left:548.9px;top:802px;line-height:20px;font-size:17.5px;font-weight:700;color:#141414;letter-spacing:0.319px;-webkit-text-stroke:0.21px;">Production Summary</span>
<span style="left:854.5px;top:817px;line-height:15px;font-size:13.3px;font-weight:700;color:#1583E0;letter-spacing:0.107px;-webkit-text-stroke:0.16px;">Entries Scanned</span>
<span style="left:1021.3px;top:816px;line-height:15px;font-size:13.5px;font-weight:400;color:#6b6b6b;letter-spacing:-0.190px;-webkit-text-stroke:0.22px;">PLC Data</span>
<span style="left:579.3px;top:853px;line-height:15px;font-size:13.3px;font-weight:400;color:#141414;letter-spacing:-0.197px;-webkit-text-stroke:0.22px;">124 bundles</span>
<span style="left:695.2px;top:853px;line-height:15px;font-size:13.3px;font-weight:400;color:#141414;letter-spacing:-0.091px;-webkit-text-stroke:0.22px;">4 pallets</span>
<span style="left:808px;top:853px;line-height:15px;font-size:13.3px;font-weight:400;color:#141414;letter-spacing:0.048px;-webkit-text-stroke:0.22px;">0 partial pallets</span>
<span style="left:1122.5px;top:572px;line-height:20px;font-size:17.5px;font-weight:700;color:#141414;letter-spacing:0.639px;-webkit-text-stroke:0.21px;">Overview</span>
<span style="left:1148.3px;top:619px;line-height:26px;font-size:23px;font-weight:700;color:#141414;letter-spacing:1.062px;-webkit-text-stroke:0.28px;">510</span>
<span style="left:1148.3px;top:646px;line-height:26px;font-size:23px;font-weight:700;color:#141414;letter-spacing:-0.805px;-webkit-text-stroke:0.28px;transform:scaleX(0.9675);transform-origin:0 50%;">PAL</span>
<span style="left:1147.9px;top:677px;line-height:15px;font-size:12.8px;font-weight:700;color:#141414;letter-spacing:-0.014px;-webkit-text-stroke:0.15px;">Pallet/Bundle</span>
<span style="left:1147.9px;top:692px;line-height:15px;font-size:12.8px;font-weight:700;color:#141414;letter-spacing:-0.090px;-webkit-text-stroke:0.15px;">Produced</span>
<span style="left:1298.5px;top:619px;line-height:26px;font-size:23px;font-weight:700;color:#141414;letter-spacing:-0.805px;-webkit-text-stroke:0.28px;transform:scaleX(0.9762);transform-origin:0 50%;">21</span>
<span style="left:1298.5px;top:646px;line-height:26px;font-size:23px;font-weight:700;color:#141414;letter-spacing:0.585px;-webkit-text-stroke:0.28px;">Minutes</span>
<span style="left:1298.1px;top:692px;line-height:15px;font-size:12.8px;font-weight:700;color:#141414;letter-spacing:-0.079px;-webkit-text-stroke:0.15px;">Down Time</span>
<span style="left:1448.7px;top:619px;line-height:26px;font-size:23px;font-weight:700;color:#141414;letter-spacing:1.380px;-webkit-text-stroke:0.28px;transform:scaleX(1.0751);transform-origin:0 50%;">34</span>
<span style="left:1448.7px;top:646px;line-height:26px;font-size:23px;font-weight:700;color:#141414;letter-spacing:0.585px;-webkit-text-stroke:0.28px;">Minutes</span>
<span style="left:1448.3px;top:692px;line-height:15px;font-size:12.8px;font-weight:700;color:#141414;letter-spacing:-0.095px;-webkit-text-stroke:0.15px;">Slow Time</span>
<span style="left:1148.3px;top:765px;line-height:26px;font-size:23px;font-weight:700;color:#141414;letter-spacing:1.380px;-webkit-text-stroke:0.28px;transform:scaleX(1.0380);transform-origin:0 50%;">625</span>
<span style="left:1148.3px;top:792px;line-height:26px;font-size:23px;font-weight:700;color:#141414;letter-spacing:0.489px;-webkit-text-stroke:0.28px;">FT/MIN</span>
<span style="left:1147.9px;top:839px;line-height:15px;font-size:12.8px;font-weight:700;color:#141414;letter-spacing:-0.196px;-webkit-text-stroke:0.15px;">Line Speed</span>
<span style="left:1298.5px;top:765px;line-height:26px;font-size:23px;font-weight:700;color:#141414;letter-spacing:-0.278px;-webkit-text-stroke:0.28px;">Yes</span>
<span style="left:1298.1px;top:824px;line-height:15px;font-size:12.8px;font-weight:700;color:#141414;letter-spacing:-0.041px;-webkit-text-stroke:0.15px;">Copper Agg.</span>
<span style="left:1298.1px;top:839px;line-height:15px;font-size:12.8px;font-weight:700;color:#141414;letter-spacing:-0.332px;-webkit-text-stroke:0.15px;">Running</span>
<span style="left:1448.7px;top:765px;line-height:26px;font-size:23px;font-weight:700;color:#141414;letter-spacing:0.663px;-webkit-text-stroke:0.28px;">142</span>
<span style="left:1448.7px;top:792px;line-height:26px;font-size:23px;font-weight:700;color:#141414;letter-spacing:-0.805px;-webkit-text-stroke:0.28px;transform:scaleX(0.9394);transform-origin:0 50%;">LBS</span>
<span style="left:1448.3px;top:839px;line-height:15px;font-size:12.8px;font-weight:700;color:#141414;letter-spacing:-0.295px;-webkit-text-stroke:0.15px;">Scrap</span>
</div></body></html>
